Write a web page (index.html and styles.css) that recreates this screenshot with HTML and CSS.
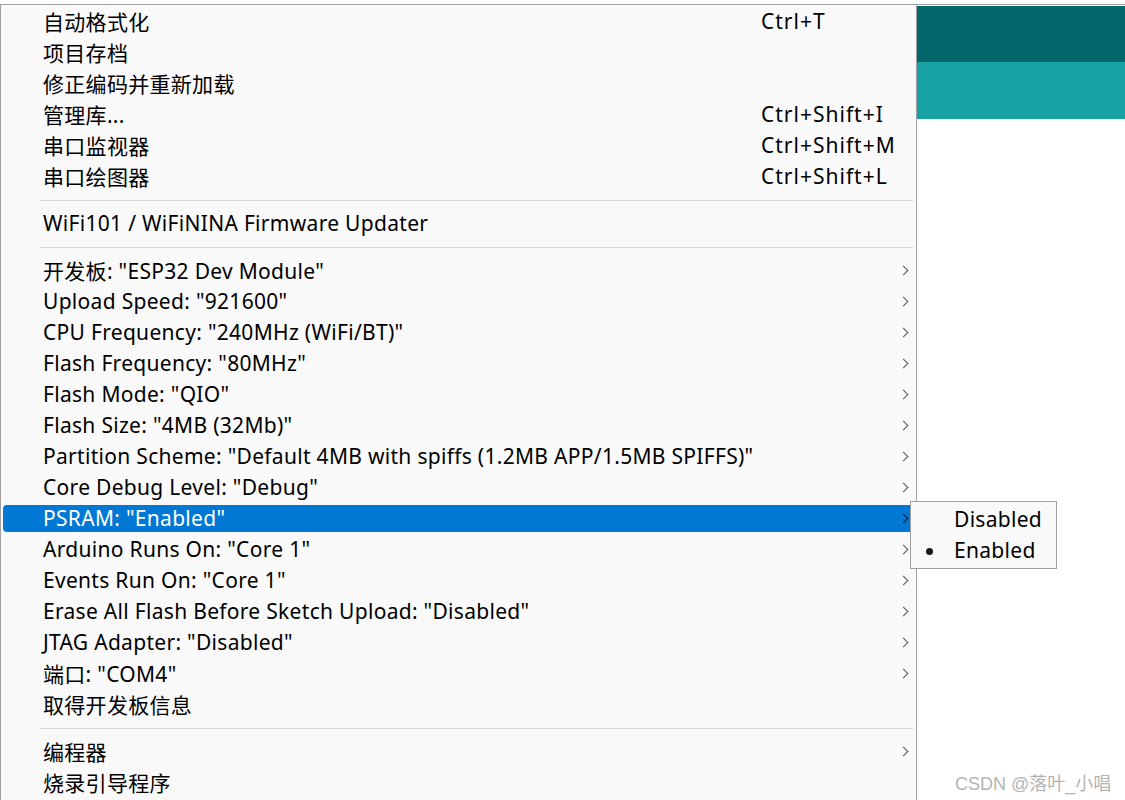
FILE: index.html
```html
<!DOCTYPE html>
<html lang="zh-CN">
<head>
<meta charset="utf-8">
<link rel="stylesheet" href="styles.css">
</head>
<body>
<div class="screen">
  <div class="menu">
    <div class="item"><span class="label">自动格式化</span><span class="key">Ctrl+T</span></div>
    <div class="item"><span class="label">项目存档</span></div>
    <div class="item"><span class="label">修正编码并重新加载</span></div>
    <div class="item"><span class="label">管理库...</span><span class="key">Ctrl+Shift+I</span></div>
    <div class="item"><span class="label">串口监视器</span><span class="key">Ctrl+Shift+M</span></div>
    <div class="item"><span class="label">串口绘图器</span><span class="key">Ctrl+Shift+L</span></div>
    <div class="sep"></div>
    <div class="item"><span class="label">WiFi101 / WiFiNINA Firmware Updater</span></div>
    <div class="sep"></div>
    <div class="item"><span class="label">开发板: "ESP32 Dev Module"</span><span class="arrow"></span></div>
    <div class="item"><span class="label">Upload Speed: "921600"</span><span class="arrow"></span></div>
    <div class="item"><span class="label">CPU Frequency: "240MHz (WiFi/BT)"</span><span class="arrow"></span></div>
    <div class="item"><span class="label">Flash Frequency: "80MHz"</span><span class="arrow"></span></div>
    <div class="item"><span class="label">Flash Mode: "QIO"</span><span class="arrow"></span></div>
    <div class="item"><span class="label">Flash Size: "4MB (32Mb)"</span><span class="arrow"></span></div>
    <div class="item"><span class="label">Partition Scheme: "Default 4MB with spiffs (1.2MB APP/1.5MB SPIFFS)"</span><span class="arrow"></span></div>
    <div class="item"><span class="label">Core Debug Level: "Debug"</span><span class="arrow"></span></div>
    <div class="item active"><span class="label">PSRAM: "Enabled"</span><span class="arrow"></span></div>
    <div class="item"><span class="label">Arduino Runs On: "Core 1"</span><span class="arrow"></span></div>
    <div class="item"><span class="label">Events Run On: "Core 1"</span><span class="arrow"></span></div>
    <div class="item"><span class="label">Erase All Flash Before Sketch Upload: "Disabled"</span><span class="arrow"></span></div>
    <div class="item"><span class="label">JTAG Adapter: "Disabled"</span><span class="arrow"></span></div>
    <div class="item"><span class="label">端口: "COM4"</span><span class="arrow"></span></div>
    <div class="item"><span class="label">取得开发板信息</span></div>
    <div class="sep"></div>
    <div class="item"><span class="label">编程器</span><span class="arrow"></span></div>
    <div class="item"><span class="label">烧录引导程序</span></div>
  </div>
  <div class="side">
    <div class="bar-dark"></div>
    <div class="bar-light"></div>
  </div>
</div>
<div class="submenu">
  <div class="sub-item"><span class="sub-label">Disabled</span></div>
  <div class="sub-item checked"><span class="bullet"></span><span class="sub-label">Enabled</span></div>
</div>
<div class="watermark">CSDN @落叶_小唱</div>
</body>
</html>
```
FILE: styles.css
```css
html, body {
  margin: 0;
  padding: 0;
}
body {
  width: 1125px;
  height: 800px;
  overflow: hidden;
  background: #ffffff;
  font-family: "Noto Sans", "Noto Sans CJK SC", sans-serif;
  font-size: 21px;
  letter-spacing: 0.3px;
  color: #000;
  position: relative;
}
.screen {
  margin-top: 4px;
  border-top: 1px solid #a0a0a0;
  display: flex;
  align-items: flex-start;
}
.menu {
  width: 915px;
  height: 800px;
  flex: 0 0 auto;
  background: #f9f9f9;
  border-left: 1px solid #a0a0a0;
  border-right: 1px solid #a0a0a0;
  padding-top: 1px;
  display: flex;
  flex-direction: column;
}
.item {
  height: 27px;
  margin: 2px 2px;
  padding: 0 4px 0 40px;
  display: flex;
  align-items: center;
  border-radius: 4px;
  white-space: nowrap;
}
.label {
  flex: 0 0 718px;
  position: relative;
  top: -1px;
}
.key {
  flex: 0 0 auto;
  letter-spacing: 1px;
  position: relative;
  top: -1px;
}
.arrow {
  margin-left: auto;
  width: 6px;
  height: 6px;
  border-right: 1.4px solid #555555;
  border-top: 1.4px solid #555555;
  transform: rotate(45deg);
  margin-right: 3px;
}
.item.active {
  background: #0078d4;
  color: #ffffff;
}
.item.active .arrow {
  border-color: #1a1a1a;
}
.sep {
  height: 16px;
  display: flex;
  align-items: center;
  margin: 0 3px 0 39px;
}
.sep::before {
  content: "";
  display: block;
  flex: 1;
  height: 1px;
  background: #d7d7d7;
}
.side {
  flex: 1;
  padding-top: 1px;
}
.bar-dark {
  height: 56px;
  background: #03666a;
}
.bar-light {
  height: 57px;
  background: #17a1a5;
}
.submenu {
  position: absolute;
  left: 910px;
  top: 501px;
  width: 145px;
  padding: 2px 0;
  background: #f9f9f9;
  border: 1px solid #a0a0a0;
}
.sub-item {
  height: 31px;
  display: flex;
  align-items: center;
  padding-left: 43px;
  position: relative;
}
.sub-label {
  position: relative;
  top: -1px;
}
.bullet {
  position: absolute;
  left: 15px;
  top: 13px;
  width: 7px;
  height: 7px;
  border-radius: 50%;
  background: #1a1a1a;
}
.watermark {
  position: absolute;
  left: 955px;
  top: 769px;
  font-family: "Liberation Sans", "Noto Sans CJK SC", sans-serif;
  font-size: 18px;
  letter-spacing: 0;
  color: #b4b4b4;
  white-space: nowrap;
}
```
